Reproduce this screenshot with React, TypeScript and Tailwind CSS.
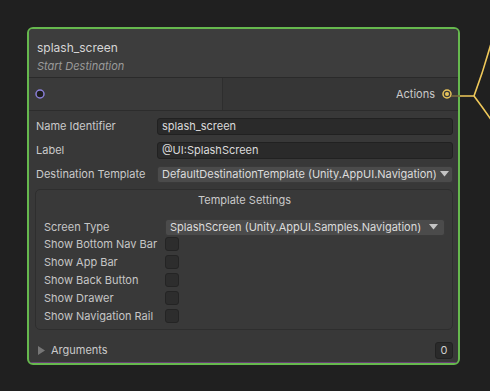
const font = { fontFamily: 'Inter, "Noto Sans", sans-serif' }

function Caret() {
  return (
    <svg width="9" height="6" viewBox="0 0 9 6" className="shrink-0">
      <polygon points="0,0 9,0 4.5,5.5" fill="#c4c4c4" />
    </svg>
  )
}

function FieldRow({ label, value }: { label: string; value: string }) {
  return (
    <div className="flex h-[18px] items-center">
      <div className="w-[122px] shrink-0 whitespace-nowrap pl-[1px] text-[11px] text-[#cacaca]">{label}</div>
      <div className="flex h-[17px] flex-1 items-center whitespace-nowrap rounded-[3px] border border-[#212121] bg-[#2a2a2a] px-[4px] text-[11px] text-[#dadada]">
        {value}
      </div>
    </div>
  )
}

function CheckRow({ label }: { label: string }) {
  return (
    <div className="flex h-[18px] items-center">
      <div className="w-[121px] shrink-0 whitespace-nowrap text-[11px] text-[#c6c6c6]">{label}</div>
      <div className="h-[14px] w-[14px] rounded-[3px] border border-[#242424] bg-[#2d2d2d]" />
    </div>
  )
}

export default function App() {
  return (
    <div className="relative h-[391px] w-[490px] overflow-hidden bg-[#202020] pl-[27px] pt-[27px]" style={font}>
      <div className="flex h-[338px] w-[433px] flex-col overflow-hidden rounded-[6px] border-2 border-[#66b84e] bg-[#383838]">
        {/* header */}
        <div className="h-[49px] shrink-0 border-b border-[#2a2a2a] bg-[#3d3d3d] pl-[8px] pt-[10px]">
          <div className="text-[12px] leading-[18px] text-[#d6d6d6]">splash_screen</div>
          <div className="text-[11px] italic leading-[18px] text-[#9a9a9a]">Start Destination</div>
        </div>

        {/* ports */}
        <div className="flex h-[33px] shrink-0 border-b border-[#2c2c2c]">
          <div className="flex w-[194px] items-center border-r border-[#2e2e2e] bg-[#3a3a3a] pl-[6px]">
            <svg width="10" height="10" viewBox="0 0 10 10">
              <circle cx="5" cy="5" r="4" fill="#1e1e1e" stroke="#8a7fd8" strokeWidth="1.5" />
            </svg>
          </div>
          <div className="flex flex-1 items-center justify-end gap-[7px] bg-[#363636] pr-[6px]">
            <span className="text-[11px] text-[#cacaca]">Actions</span>
            <svg width="10" height="10" viewBox="0 0 10 10">
              <circle cx="5" cy="5" r="4" fill="#3a3a3a" stroke="#e8c45a" strokeWidth="1.5" />
              <circle cx="5" cy="5" r="2" fill="#e8c45a" />
            </svg>
          </div>
        </div>

        {/* body */}
        <div className="flex flex-1 flex-col border-b border-[#6a3f78] pl-[6px] pr-[5px] pt-[6px]">
          <div className="flex flex-col gap-[6px]">
            <FieldRow label="Name Identifier" value="splash_screen" />
            <FieldRow label="Label" value="@UI:SplashScreen" />
            <div className="flex h-[18px] items-center">
              <div className="w-[122px] shrink-0 whitespace-nowrap pl-[1px] text-[11px] text-[#cacaca]">Destination Template</div>
              <div className="flex h-[17px] flex-1 items-center justify-between whitespace-nowrap rounded-[3px] border border-[#3a3a3a] bg-[#4b4b4b] pl-[4px] pr-[3px] text-[11px] text-[#dcdcdc]">
                <span>DefaultDestinationTemplate (Unity.AppUI.Navigation)</span>
                <Caret />
              </div>
            </div>
          </div>

          {/* template settings */}
          <div className="mt-[6px] h-[141px] shrink-0 rounded-[5px] border border-[#2e2e2e] bg-[#393939] pl-[8px] pr-[7px]">
            <div className="h-[20px] text-center text-[11px] leading-[20px] text-[#cacaca]">Template Settings</div>
            <div className="mt-[9px] flex h-[16px] items-center">
              <div className="w-[121px] shrink-0 whitespace-nowrap text-[11px] text-[#c6c6c6]">Screen Type</div>
              <div className="flex h-[17px] flex-1 items-center justify-between whitespace-nowrap rounded-[3px] border border-[#3a3a3a] bg-[#4b4b4b] pl-[4px] pr-[6px] text-[11px] text-[#dcdcdc]">
                <span>SplashScreen (Unity.AppUI.Samples.Navigation)</span>
                <Caret />
              </div>
            </div>
            <CheckRow label="Show Bottom Nav Bar" />
            <CheckRow label="Show App Bar" />
            <CheckRow label="Show Back Button" />
            <CheckRow label="Show Drawer" />
            <CheckRow label="Show Navigation Rail" />
          </div>

          {/* arguments */}
          <div className="flex flex-1 items-center justify-between pl-[3px] pt-[8px]">
            <div className="flex items-center gap-[6px]">
              <svg width="7" height="9" viewBox="0 0 7 9">
                <polygon points="0,0 7,4.5 0,9" fill="#767676" />
              </svg>
              <span className="text-[11px] text-[#cacaca]">Arguments</span>
            </div>
            <div className="flex h-[17px] w-[18px] items-center justify-center rounded-[3px] border border-[#222] bg-[#2a2a2a] text-[11px] text-[#d0d0d0]">
              0
            </div>
          </div>
        </div>
      </div>

      {/* edge */}
      <svg className="pointer-events-none absolute inset-0" width="490" height="391">
        <line x1="451" y1="96" x2="460" y2="96" stroke="#7d6c3e" strokeWidth="1.5" />
        <path d="M460 96 H474 C480 80 486 62 492 40" fill="none" stroke="#f0c95a" strokeWidth="1.6" />
        <path d="M474 96 C480 104 486 112 494 124" fill="none" stroke="#f0c95a" strokeWidth="1.6" />
      </svg>
    </div>
  )
}
